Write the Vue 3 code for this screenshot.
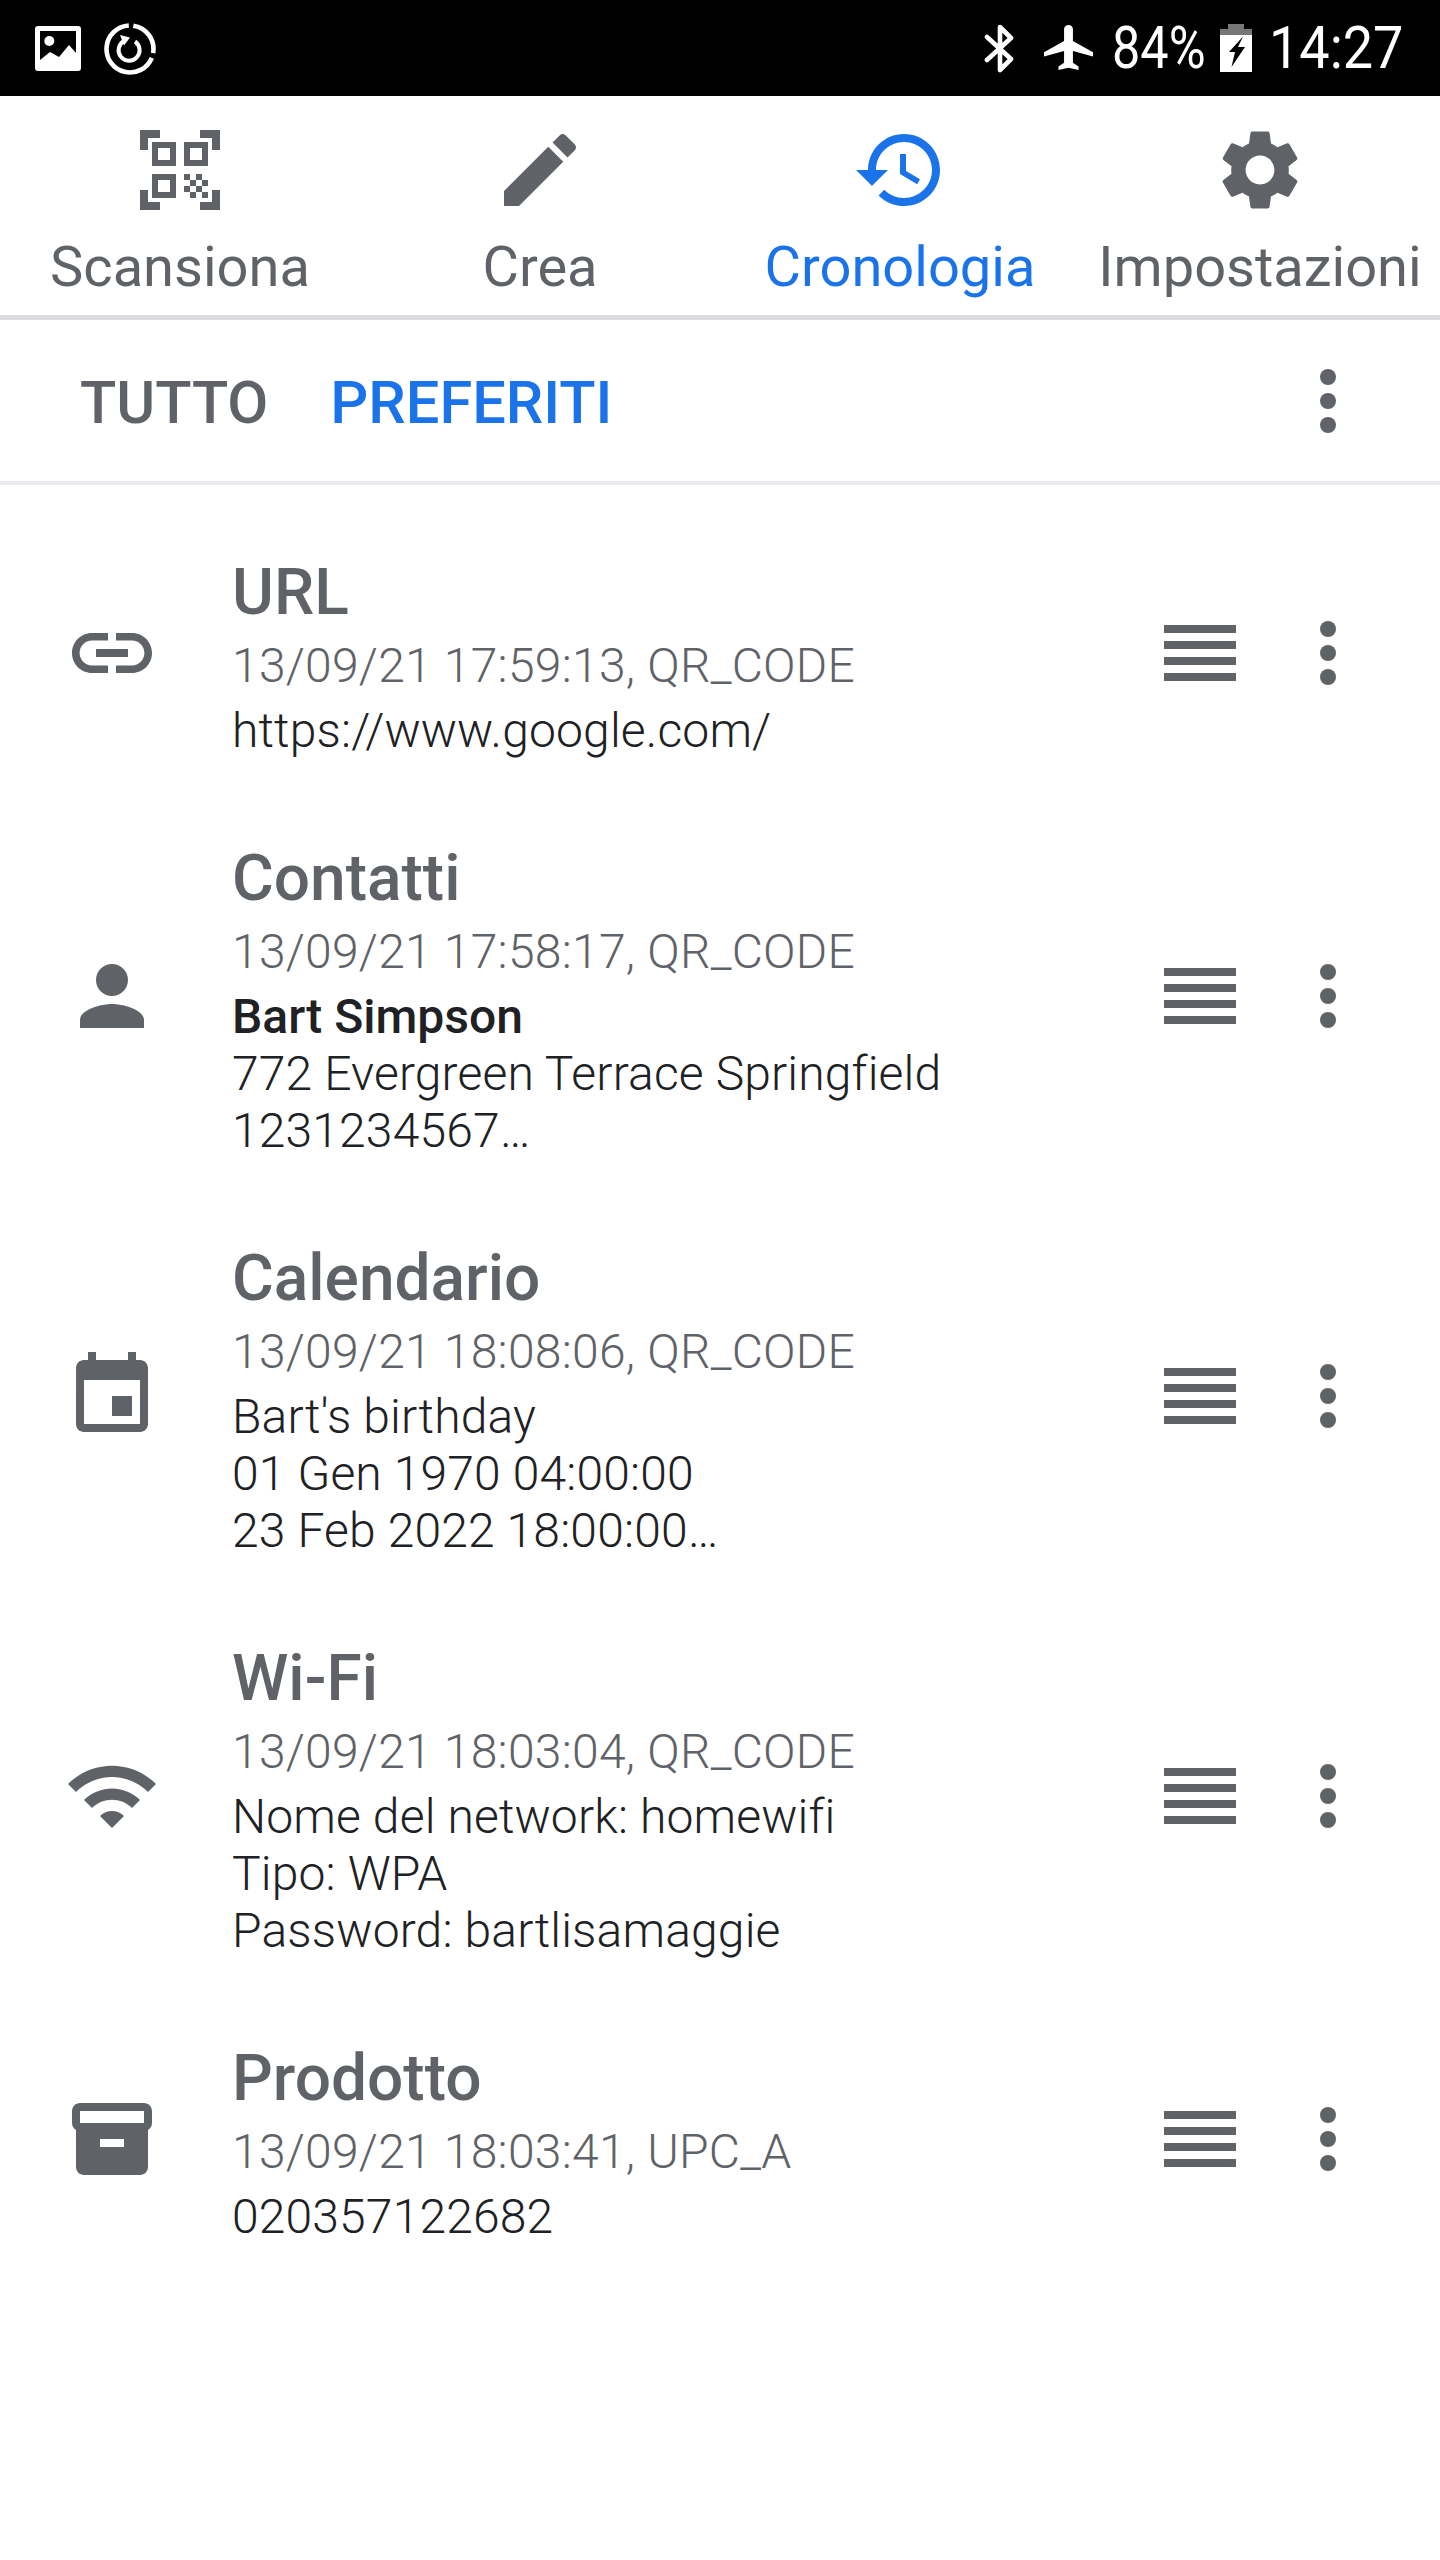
<script setup>
const tabs = [
  { label: 'Scansiona', icon: 'qr' },
  { label: 'Crea', icon: 'M3 17.25V21h3.75L17.81 9.94l-3.75-3.75L3 17.25zM20.71 7.04c.39-.39.39-1.02 0-1.41l-2.34-2.34c-.39-.39-1.02-.39-1.41 0l-1.83 1.83 3.75 3.75 1.83-1.83z' },
  { label: 'Cronologia', icon: 'M13 3c-4.97 0-9 4.03-9 9H1l3.89 3.89.07.14L9 12H6c0-3.87 3.13-7 7-7s7 3.13 7 7-3.13 7-7 7c-1.93 0-3.68-.79-4.94-2.06l-1.42 1.42C8.27 19.99 10.51 21 13 21c4.97 0 9-4.03 9-9s-4.03-9-9-9zm-1 5v5l4.28 2.54.72-1.21-3.5-2.08V8H12z', active: true },
  { label: 'Impostazioni', icon: 'M19.14 12.94c.04-.3.06-.61.06-.94 0-.32-.02-.64-.07-.94l2.03-1.58c.18-.14.23-.41.12-.61l-1.92-3.32c-.12-.22-.37-.29-.59-.22l-2.39.96c-.5-.38-1.03-.7-1.62-.94l-.36-2.54c-.04-.24-.24-.41-.48-.41h-3.84c-.24 0-.43.17-.47.41l-.36 2.54c-.59.24-1.13.57-1.62.94l-2.39-.96c-.22-.08-.47 0-.59.22L2.74 8.87c-.12.21-.08.47.12.61l2.03 1.58c-.05.3-.09.63-.09.94s.02.64.07.94l-2.03 1.58c-.18.14-.23.41-.12.61l1.92 3.32c.12.22.37.29.59.22l2.39-.96c.5.38 1.03.7 1.62.94l.36 2.54c.05.24.24.41.48.41h3.84c.24 0 .44-.17.47-.41l.36-2.54c.59-.24 1.13-.56 1.62-.94l2.39.96c.22.08.47 0 .59-.22l1.92-3.32c.12-.22.07-.47-.12-.61l-2.01-1.58zM12 15.6c-1.98 0-3.6-1.62-3.6-3.6s1.62-3.6 3.6-3.6 3.6 1.62 3.6 3.6-1.62 3.6-3.6 3.6z' },
]

const records = [
  {
    title: 'URL', meta: '13/09/21 17:59:13, QR_CODE', lines: ['https://www.google.com/'],
    icon: 'M3.9 12c0-1.71 1.39-3.1 3.1-3.1h4V7H7c-2.76 0-5 2.24-5 5s2.24 5 5 5h4v-1.9H7c-1.71 0-3.1-1.39-3.1-3.1zM8 13h8v-2H8v2zm9-6h-4v1.9h4c1.71 0 3.1 1.39 3.1 3.1s-1.39 3.1-3.1 3.1h-4V17h4c2.76 0 5-2.24 5-5s-2.24-5-5-5z',
  },
  {
    title: 'Contatti', meta: '13/09/21 17:58:17, QR_CODE', strong: 'Bart Simpson', lines: ['772 Evergreen Terrace Springfield', '1231234567…'],
    icon: 'M12 12c2.21 0 4-1.79 4-4s-1.79-4-4-4-4 1.79-4 4 1.79 4 4 4zm0 2c-2.67 0-8 1.34-8 4v2h16v-2c0-2.66-5.33-4-8-4z',
  },
  {
    title: 'Calendario', meta: '13/09/21 18:08:06, QR_CODE', lines: ["Bart's birthday", '01 Gen 1970 04:00:00', '23 Feb 2022 18:00:00…'],
    icon: 'M17 12h-5v5h5v-5zM16 1v2H8V1H6v2H5c-1.11 0-1.99.9-1.99 2L3 19c0 1.1.89 2 2 2h14c1.1 0 2-.9 2-2V5c0-1.1-.9-2-2-2h-1V1h-2zm3 18H5V8h14v11z',
  },
  {
    title: 'Wi-Fi', meta: '13/09/21 18:03:04, QR_CODE', lines: ['Nome del network: homewifi', 'Tipo: WPA', 'Password: bartlisamaggie'],
    icon: 'M1 9l2 2c4.97-4.97 13.03-4.97 18 0l2-2C16.93 2.93 7.08 2.93 1 9zm8 8l3 3 3-3c-1.65-1.66-4.34-1.66-6 0zm-4-4l2 2c2.76-2.76 7.24-2.76 10 0l2-2C15.14 9.14 8.87 9.14 5 13z',
  },
  {
    title: 'Prodotto', meta: '13/09/21 18:03:41, UPC_A', lines: ['020357122682'],
    icon: 'M20 3H4c-1.1 0-2 .9-2 2v3c0 .75.41 1.4 1 1.75V19c0 1.1.9 2 2 2h14c1.1 0 2-.9 2-2V9.75c.59-.35 1-1 1-1.75V5c0-1.1-.9-2-2-2zM4 5h16v3H4V5zm11 9H9v-2h6v2z',
  },
]
</script>

<template>
  <div class="screen">
    <div class="statusbar">
      <div class="status-left">
        <svg class="st-pic" viewBox="0 0 46 45">
          <path fill="#fff" fill-rule="evenodd" d="M3 0h40a3 3 0 0 1 3 3v39a3 3 0 0 1-3 3H3a3 3 0 0 1-3-3V3a3 3 0 0 1 3-3zM5 5v29l10-8 9 5 10-12 7 8V5z" />
          <circle cx="14.3" cy="15" r="5" fill="#fff" />
        </svg>
        <svg class="st-sync" viewBox="0 0 52 52" fill="none" stroke="#fff">
          <path stroke-width="4.6" d="M29.3 2.7A23.5 23.5 0 0 1 49.1 30.1M47.8 34.8A23.5 23.5 0 1 1 24.8 2.5" />
          <path stroke-width="4" d="M31 18.5A10.5 10.5 0 1 1 20 18" />
          <path fill="#fff" stroke="none" d="M16 12l10 2.5-6 8z" />
        </svg>
      </div>
      <div class="status-right">
        <svg class="st-bt" viewBox="0 0 30 49" fill="none" stroke="#fff" stroke-width="4.6" stroke-linecap="round" stroke-linejoin="round">
          <path d="M3 13l24 22-11 11V3l11 11L3 36" />
        </svg>
        <svg class="st-plane" viewBox="1.5 0.5 21 22" preserveAspectRatio="none">
          <path fill="#fff" d="M22.5 15.6v-2.1L13.9 8.1V2.4c0-1-.8-1.9-1.9-1.9s-1.9.9-1.9 1.9v5.7L1.5 13.5v2.1l8.6-2.7v5.7l-2.4 1.8v1.6l4.3-1.1 4.3 1.1v-1.6l-2.4-1.8v-5.7z" />
        </svg>
        <span class="st-text pct">84%</span>
        <svg class="st-batt" viewBox="0 0 32 48">
          <path fill="#777" d="M8 0h16v5h8v6H0V5h8z" />
          <path fill="#fff" fill-rule="evenodd" d="M0 11h32v37H0zM23 12.5L9 28h6l-3.5 15L25 23h-7z" />
        </svg>
        <span class="st-text time">14:27</span>
      </div>
    </div>

    <nav class="tabs">
      <div v-for="tab in tabs" :key="tab.label" class="tab" :class="{ active: tab.active }">
        <svg class="icon" viewBox="0 0 24 24">
          <template v-if="tab.icon === 'qr'">
            <path d="M2 2h5v2H4v3H2zM17 2h5v5h-2V4h-3zM2 17h2v3h3v2H2zM20 17h2v5h-5v-2h3z" />
            <path fill-rule="evenodd" d="M5 5h6v6H5zM6.5 6.5v3h3v-3zM13 5h6v6h-6zM14.5 6.5v3h3v-3zM5 13h6v6H5zM6.5 14.5v3h3v-3z" />
            <path d="M13 13h1.5v1.5H13zM16 13h1.5v1.5H16zM14.5 14.5H16V16h-1.5zM17.5 14.5H19V16h-1.5zM13 16h1.5v1.5H13zM16 16h1.5v1.5H16zM14.5 17.5H16V19h-1.5zM17.5 17.5H19V19h-1.5z" />
          </template>
          <path v-else :d="tab.icon" />
        </svg>
        <span class="tab-label">{{ tab.label }}</span>
      </div>
    </nav>

    <div class="subtabs">
      <span class="subtab">TUTTO</span>
      <span class="subtab active">PREFERITI</span>
      <span class="dots header-dots"><i></i><i></i><i></i></span>
    </div>

    <div class="list">
      <div v-for="rec in records" :key="rec.title" class="row">
        <svg class="icon row-icon" viewBox="0 0 24 24"><path :d="rec.icon" /></svg>
        <div class="body">
          <div class="title">{{ rec.title }}</div>
          <div class="meta">{{ rec.meta }}</div>
          <div class="lines">
            <div v-if="rec.strong" class="line strong">{{ rec.strong }}</div>
            <div v-for="line in rec.lines" :key="line" class="line">{{ line }}</div>
          </div>
        </div>
        <span class="bars"><i></i><i></i><i></i><i></i></span>
        <span class="dots"><i></i><i></i><i></i></span>
      </div>
    </div>
  </div>
</template>

<style scoped>
.screen {
  width: 1440px;
  height: 2560px;
  background: #fff;
  overflow: hidden;
  font-family: Roboto, "Liberation Sans", sans-serif;
  color: #5f6368;
}
.statusbar {
  height: 96px;
  background: #000;
  display: flex;
  align-items: center;
  justify-content: space-between;
  padding: 0 39px 0 35px;
  color: #fff;
}
.status-left, .status-right {
  display: flex;
  align-items: center;
}
.st-pic { width: 46px; height: 45px; margin-right: 23px; }
.st-sync { width: 52px; height: 52px; transform: translateY(1px); }
.st-bt { width: 30px; height: 49px; margin-right: 30px; }
.st-plane { width: 49px; height: 46px; margin-right: 19px; }
.st-batt { width: 32px; height: 48px; margin: 0 17px 0 15px; }
.st-text {
  display: inline-block;
  font-size: 60px;
  line-height: 96px;
  white-space: nowrap;
  transform-origin: left center;
}
.pct { width: 93px; transform: scaleX(.84); }
.time { width: 132px; transform: scaleX(.9); }
.tabs {
  display: grid;
  grid-template-columns: repeat(4, 360px);
  height: 224px;
  box-sizing: border-box;
  border-bottom: 5px solid #dadce0;
}
.tab {
  display: flex;
  flex-direction: column;
  align-items: center;
  padding-top: 26px;
}
.tab.active { color: #1a73e8; }
.icon {
  width: 96px;
  height: 96px;
  fill: currentColor;
  flex: none;
}
.tab-label {
  font-size: 56px;
  line-height: 66px;
  margin-top: 16px;
  white-space: nowrap;
}
.subtabs {
  height: 165px;
  box-sizing: border-box;
  border-bottom: 4px solid #e8eaed;
  display: flex;
  align-items: center;
  padding-left: 80px;
  gap: 62px;
}
.subtab {
  font-size: 59.5px;
  font-weight: 500;
  line-height: 66px;
  margin-top: 4px;
}
.subtab.active { color: #1a73e8; }
.header-dots { margin-left: auto; margin-right: 104px; }
.list { padding-top: 25px; }
.row {
  display: flex;
  align-items: center;
  padding: 35px 104px 35px 64px;
}
.row-icon { margin-right: 72px; }
.body { flex: 1; min-width: 0; padding: 10px 0 2px; }
.title {
  font-size: 64px;
  font-weight: 500;
  line-height: 76px;
}
.meta {
  font-size: 48px;
  font-weight: 300;
  line-height: 57px;
  letter-spacing: .25px;
  color: #5f6368;
  margin-top: 6px;
}
.lines { margin-top: 8px; }
.line {
  font-size: 48px;
  font-weight: 300;
  line-height: 57px;
  letter-spacing: .15px;
  color: #202124;
}
.line.strong { font-weight: 500; letter-spacing: 0; }
.bars {
  width: 72px;
  display: flex;
  flex-direction: column;
  gap: 8px;
  margin-right: 84px;
}
.bars i {
  display: block;
  height: 8px;
  background: #5f6368;
}
.dots {
  width: 16px;
  display: flex;
  flex-direction: column;
  gap: 8px;
}
.dots i {
  display: block;
  width: 16px;
  height: 16px;
  border-radius: 50%;
  background: #5f6368;
}
</style>

<style>
html, body { background: #fff; }
</style>
